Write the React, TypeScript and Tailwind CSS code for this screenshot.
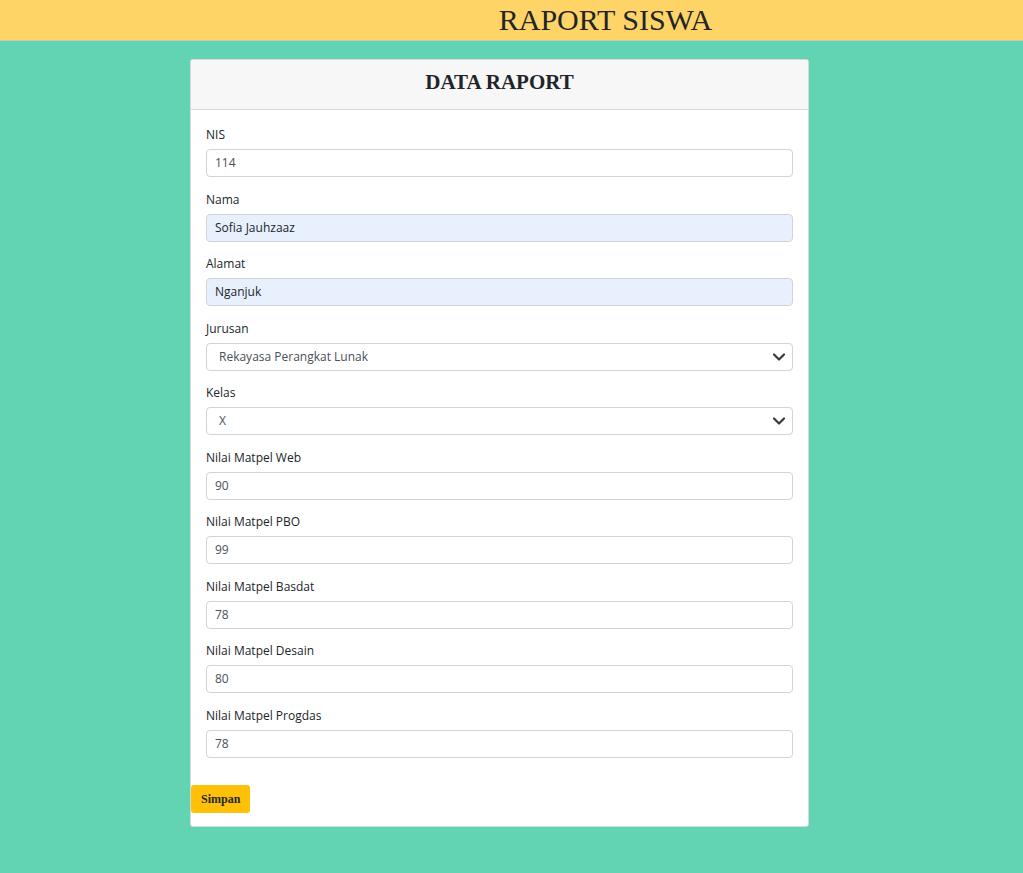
import React from "react";

const sans = { fontFamily: '"Open Sans", "Noto Sans", sans-serif' };

function Chevron() {
  return (
    <svg width="14" height="10" viewBox="0 0 14 10" className="absolute right-[6px] top-1/2 -translate-y-1/2">
      <path d="M2 2.5l5 5 5-5" fill="none" stroke="#343a40" strokeWidth="2.2" strokeLinecap="round" strokeLinejoin="round" />
    </svg>
  );
}

function Field({ label, value, fill, select }: { label: string; value: string; fill?: boolean; select?: boolean }) {
  return (
    <div className="flex flex-col">
      <label className="text-[12px] leading-[18px] text-[#212529] mb-[5px]">{label}</label>
      {select ? (
        <div className={`relative h-[28px] rounded-[4px] border border-[#ced4da] bg-white flex items-center pl-[12px] text-[12px] text-[#495057]`}>
          {value}
          <Chevron />
        </div>
      ) : (
        <div className={`h-[28px] rounded-[4px] border border-[#ced4da] ${fill ? "bg-[#e8f0fe] text-[#212529]" : "bg-white text-[#495057]"} flex items-center pl-[8px] text-[12px]`}>
          {value}
        </div>
      )}
    </div>
  );
}

export default function App() {
  const fields: { label: string; value: string; fill?: boolean; select?: boolean }[] = [
    { label: "NIS", value: "114" },
    { label: "Nama", value: "Sofia Jauhzaaz", fill: true },
    { label: "Alamat", value: "Nganjuk", fill: true },
    { label: "Jurusan", value: "Rekayasa Perangkat Lunak", select: true },
    { label: "Kelas", value: "X", select: true },
    { label: "Nilai Matpel Web", value: "90" },
    { label: "Nilai Matpel PBO", value: "99" },
    { label: "Nilai Matpel Basdat", value: "78" },
    { label: "Nilai Matpel Desain", value: "80" },
    { label: "Nilai Matpel Progdas", value: "78" },
  ];
  return (
    <div className="min-h-[873px] bg-[#62d4b3]" style={sans}>
      <div className="h-[41px] bg-[#ffd466] border-b border-[#c9c9b0] flex justify-center">
        <h1 className="text-[30px] leading-[40px] text-[#212529] pl-[188px]" style={{ fontFamily: '"Liberation Serif", serif' }}>
          RAPORT SISWA
        </h1>
      </div>
      <div className="flex pl-[190px] pt-[18px]">
        <div className="w-[619px] bg-white border border-[#d8d8d8] rounded-[3px]">
          <div className="h-[50px] bg-[#f7f7f7] border-b border-[#d8d8d8] flex items-center justify-center pb-[4px]">
            <h2 className="text-[21px] font-bold text-[#212529]" style={{ fontFamily: '"Liberation Serif", serif' }}>
              DATA RAPORT
            </h2>
          </div>
          <div className="px-[15px] pt-[16px] flex flex-col gap-[13.5px]">
            {fields.map((f) => (
              <Field key={f.label} {...f} />
            ))}
          </div>
          <div className="pt-[27px] pb-[13px]">
            <button
              className="h-[28px] px-[10px] bg-[#ffc107] rounded-[3px] text-[12px] font-bold text-[#212529]"
              style={{ fontFamily: '"Liberation Serif", serif' }}
            >
              Simpan
            </button>
          </div>
        </div>
      </div>
    </div>
  );
}
